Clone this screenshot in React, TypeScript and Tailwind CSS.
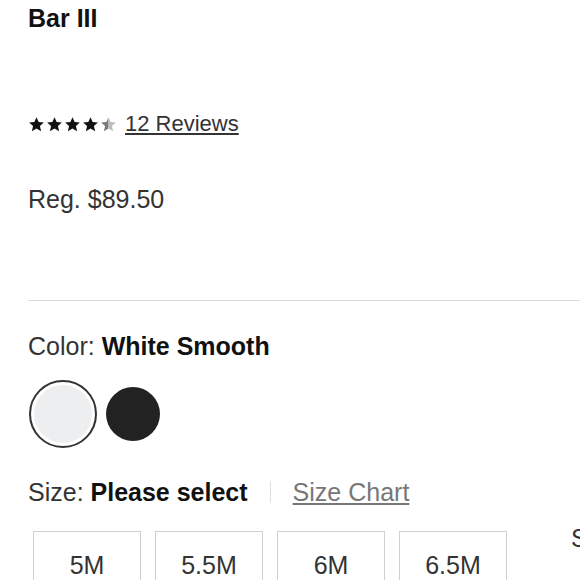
const sizes = ['5M', '5.5M', '6M', '6.5M'];

function Star({ fill }: { fill: 'full' | 'half' }) {
  const id = 'half-star';
  return (
    <svg width="17" height="17" viewBox="0 0 24 24" className="shrink-0">
      {fill === 'half' && (
        <defs>
          <linearGradient id={id} x1="0" x2="1" y1="0" y2="0">
            <stop offset="50%" stopColor="#7a7a7a" />
            <stop offset="50%" stopColor="#bdbdbd" />
          </linearGradient>
        </defs>
      )}
      <path
        d="M12 1.6l3.05 6.9 7.35.7-5.55 4.95 1.65 7.35L12 17.7l-6.5 3.8 1.65-7.35L1.6 9.2l7.35-.7z"
        fill={fill === 'full' ? '#111' : `url(#${id})`}
      />
    </svg>
  );
}

export default function App() {
  return (
    <div className="w-[580px] h-[580px] overflow-hidden bg-white font-['Liberation_Sans',Arial,sans-serif] text-[#333]">
      <div className="pl-[28px] flex flex-col">
        {/* Brand */}
        <h1 className="text-[25px] leading-[36px] font-bold text-[#111]">Bar III</h1>

        {/* Rating */}
        <div className="mt-[73px] flex items-center h-[30px]">
          <div className="flex gap-[1px]">
            <Star fill="full" />
            <Star fill="full" />
            <Star fill="full" />
            <Star fill="full" />
            <Star fill="half" />
          </div>
          <a className="ml-[8px] text-[22px] leading-[30px] underline text-[#333]">12 Reviews</a>
        </div>

        {/* Price */}
        <div className="mt-[42px] text-[25px] leading-[36px] text-[#333]">Reg. $89.50</div>

        <div className="mt-[83px] h-px bg-[#d9d9d9]" />

        {/* Color */}
        <div className="mt-[27px] text-[25px] leading-[36px]">
          Color: <span className="font-bold text-[#111]">White Smooth</span>
        </div>
        <div className="mt-[16px] ml-[1px] flex items-center gap-[9px]">
          <div className="w-[68px] h-[68px] rounded-full border-2 border-[#333] p-[3px] bg-white">
            <div className="w-full h-full rounded-full bg-[#eceef0]" />
          </div>
          <div className="w-[54px] h-[54px] rounded-full bg-[#222]" />
        </div>

        {/* Size */}
        <div className="mt-[26px] flex items-center text-[25px] leading-[36px]">
          <span>
            Size: <span className="font-bold text-[#111]">Please select</span>
          </span>
          <span className="mx-[22px] w-px h-[22px] bg-[#e0e0e0]" />
          <a className="underline text-[#777]">Size Chart</a>
        </div>

        <div className="mt-[10px] flex items-start">
          <div className="mt-[11px] ml-[5px] flex gap-[14px]">
            {sizes.map((s) => (
              <button
                key={s}
                className="w-[108px] h-[68px] border border-[#d0d0d0] flex items-center justify-center text-[25px] leading-[36px] text-[#333]"
              >
                {s}
              </button>
            ))}
          </div>
          <span className="ml-[64px] text-[25px] leading-[36px] whitespace-nowrap">Size</span>
        </div>
      </div>
    </div>
  );
}
